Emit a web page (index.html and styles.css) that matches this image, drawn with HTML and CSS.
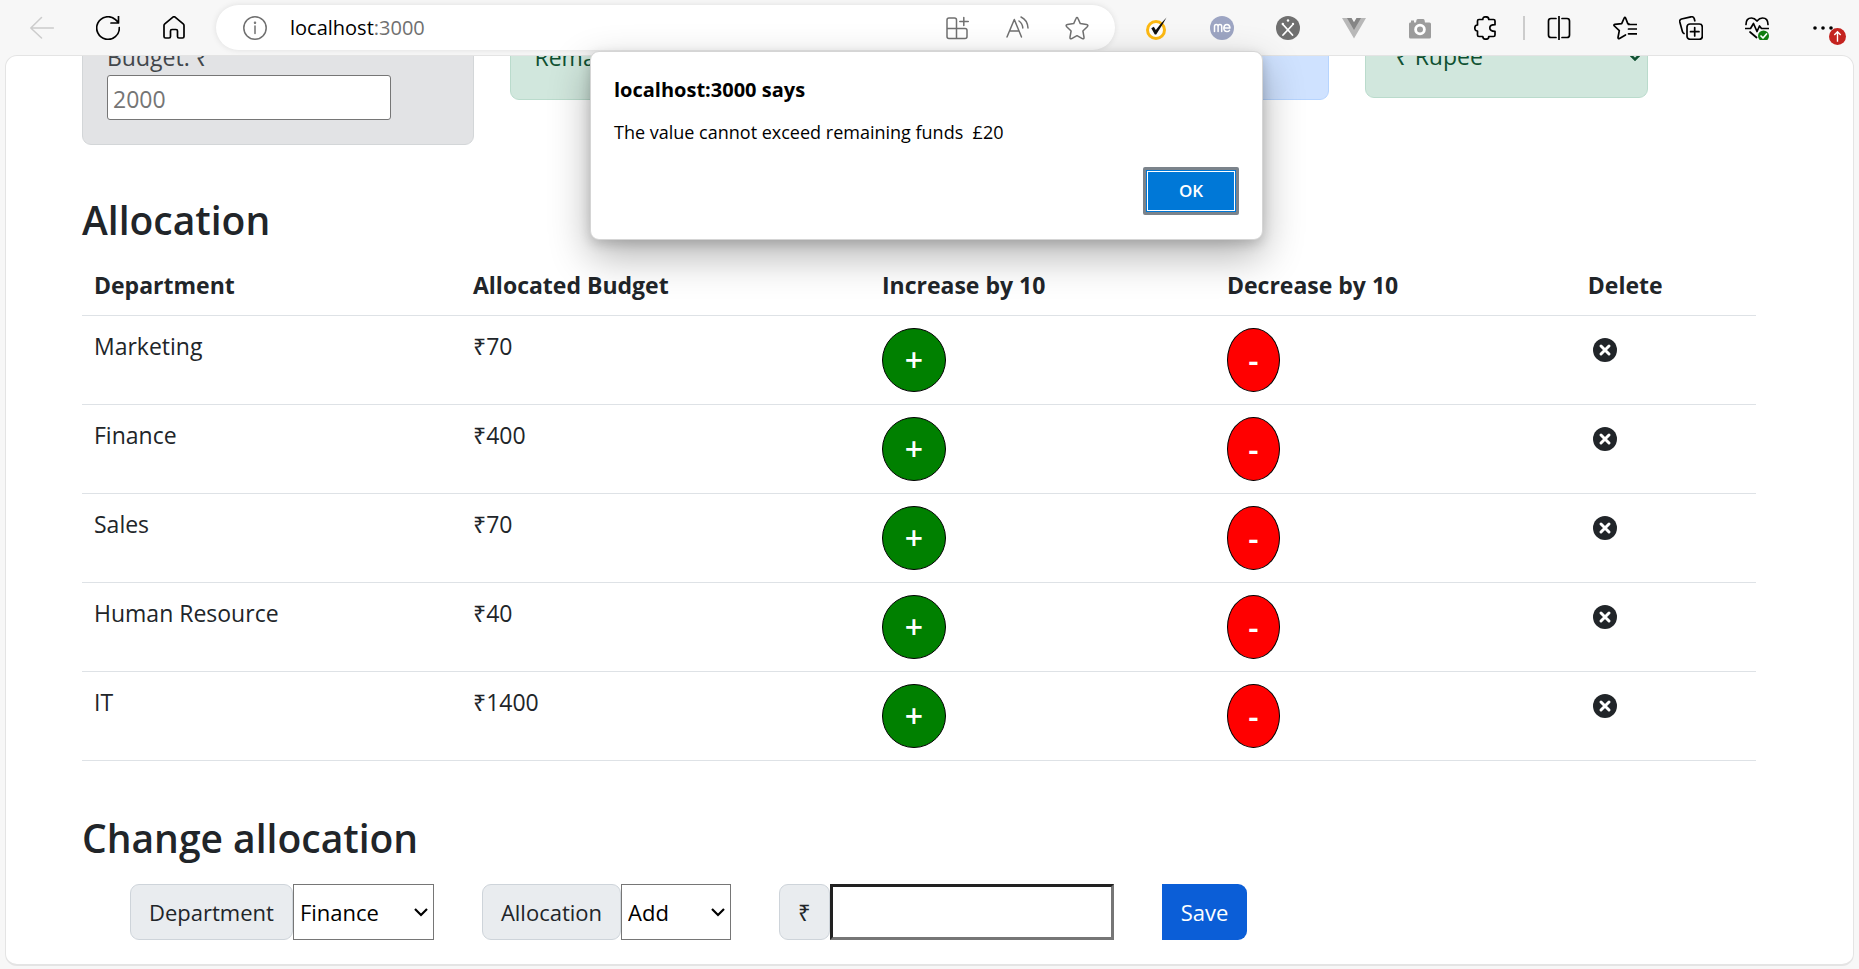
FILE: index.html
```html
<!DOCTYPE html>
<html lang="en">
<head>
<meta charset="utf-8">
<title>Budget Allocation</title>
<link rel="stylesheet" href="styles.css">
</head>
<body>
<header class="toolbar">
  <button class="tool tool-disabled" aria-label="Back"><svg class="icon" viewBox="0 0 24 24"><path d="M23.500 12H0.800M11.500 1.500L0.800 12l10.700 10"/></svg></button>
  <button class="tool" aria-label="Refresh"><svg class="icon icon-strong" viewBox="0 0 24 24"><path d="M23.300 11.500A11.300 11.300 0 1 1 19.500 3.600L22.300 6.500M22.500 0v7h-7.500"/></svg></button>
  <button class="tool" aria-label="Home"><svg class="icon icon-strong" viewBox="0 0 24 24"><path d="M2 9.500Q2 8.500 2.800 7.800L10.600 1.300Q12 .2 13.400 1.300L21.200 7.800Q22 8.500 22 9.500V20.500Q22 22 20.500 22H17Q15.500 22 15.500 20.500V15Q15.500 13.500 14 13.500H10Q8.500 13.500 8.500 15V20.500Q8.500 22 7 22H3.500Q2 22 2 20.500Z"/></svg></button>
  <div class="address">
    <button class="info" aria-label="Site information"><svg class="icon" viewBox="0 0 24 24"><circle cx="12" cy="12" r="11.200"/><path d="M12 10v7.500"/><circle cx="12" cy="6.800" r=".5"/></svg></button>
    <span class="url">localhost<span class="port">:3000</span></span>
    <button class="addr-tool" aria-label="Apps"><svg class="icon" viewBox="0 0 24 24"><path d="M11.500 22.500H4Q2 22.500 2 20.500V4Q2 2 4 2H9.500Q11.500 2 11.500 4ZM2 12.500H20Q22 12.500 22 14.500V20.500Q22 22.500 20 22.500H11.500M18.800 1.500v8M14.800 5.500h8.500"/></svg></button>
    <button class="addr-tool" aria-label="Read aloud"><svg class="icon" viewBox="0 0 24 24"><path d="M2 21L9.300 3.500L16.500 21M4.500 15H14M14 5Q17.500 7.500 17.800 12M16 1Q22.500 4 23 12"/></svg></button>
    <button class="addr-tool" aria-label="Add to favorites"><svg class="icon" viewBox="0 0 24 24"><path d="M12 1.500Q12.600 1.500 13 2.500L15.300 7.600L21.500 8.600Q23.800 9 22.300 10.700L17.900 15L19 21.200Q19.200 23.400 17.300 22.600L12 19.700L6.700 22.600Q4.800 23.400 5 21.200L6.100 15L1.700 10.700Q.2 9 2.500 8.600L8.700 7.600L11 2.500Q11.400 1.500 12 1.500Z"/></svg></button>
  </div>
  <button class="tool" aria-label="Norton"><svg class="icon" viewBox="0 0 24 24"><circle cx="12" cy="14" r="8.500" fill="#fff" stroke="#fdb913" stroke-width="3"/><path d="M7.300 12.300L9.800 10.800L11.800 14L17 7.500L22.500 1.500L18.500 8.500L12.200 18.500H10.800Z" fill="#111" stroke="none"/></svg></button>
  <button class="tool" aria-label="me"><svg class="icon" viewBox="0 0 24 24"><circle cx="12" cy="12" r="12" fill="#9da5c3" stroke="none"/><path d="M4.500 15.500V10.500Q4.500 8.500 6.300 8.500T8.100 10.500V15.500M8.100 10.500Q8.100 8.500 9.900 8.500T11.700 10.500V15.500M13.800 12H20Q19.600 8.500 16.900 8.500T13.800 12Q13.900 15.500 17 15.500Q18.700 15.500 19.500 14.300" stroke="#fff"/></svg></button>
  <button class="tool" aria-label="X extension"><svg class="icon" viewBox="0 0 24 24"><circle cx="12" cy="12" r="12" fill="#707070" stroke="none"/><path d="M7 8.500L16.500 19M16 9.500L7 19" stroke="#fff" stroke-width="1.800"/><circle cx="12" cy="4.500" r="1.200" fill="#fff" stroke="none"/><circle cx="6.800" cy="8" r="1.200" fill="#fff" stroke="none"/><circle cx="17" cy="8" r="1.200" fill="#fff" stroke="none"/></svg></button>
  <button class="tool" aria-label="Vue"><svg class="icon" viewBox="0 0 24 24"><path d="M0 2H9L12 7L15 2H24L12 22.500Z" fill="#b8b8b8" stroke="none"/><path d="M5 2H9.500L12 6.300L14.500 2H19L12 14Z" fill="#858585" stroke="none"/></svg></button>
  <button class="tool" aria-label="Screenshot"><svg class="icon" viewBox="0 0 24 24"><path d="M3 4.500H6V6.500H3ZM2 6.500H8L8.500 4Q8.800 3 10 3H15Q16.200 3 16.500 4L17 6.500H21.500Q23 6.500 23 8V21Q23 22.500 21.500 22.500H2.500Q1 22.500 1 21V8Q1 6.500 2 6.500Z" fill="#9c9c9c" stroke="none"/><circle cx="12" cy="13.500" r="4.400" fill="#9c9c9c" stroke="#fff" stroke-width="2.800"/></svg></button>
  <button class="tool" aria-label="Extensions"><svg class="icon icon-strong" viewBox="0 0 24 24"><path d="M3.500 5Q3.500 3.500 5 3.500H8.800Q8.800 .8 11.800 .8T14.800 3.500H19.500Q21 3.500 21 5V8.700Q15.800 8.700 15.800 12T21 15.300V19Q21 20.500 19.500 20.500H14.800Q14.800 23.200 11.800 23.200T8.800 20.500H5Q3.500 20.500 3.500 19V15Q.8 15 .8 12T3.500 9Z"/></svg></button>
  <span class="separator"></span>
  <button class="tool" aria-label="Split screen"><svg class="icon icon-strong" viewBox="0 0 24 24"><path d="M9 2.500H4Q1.500 2.500 1.500 5V19Q1.500 21.500 4 21.500H9M15 2.500H20Q22.500 2.500 22.500 5V19Q22.500 21.500 20 21.500H15M12 .5V23.500"/></svg></button>
  <button class="tool" aria-label="Favorites"><svg class="icon icon-strong" viewBox="0 0 24 24"><path d="M16.500 8.300L14.800 7.600L12.600 2Q11.900 .5 11.200 2L8.700 7.600L1.800 8.400Q.3 8.800 1.400 10L6.300 14.600L5 21.500Q5 23.200 6.500 22.500L12.500 19M15.500 8.500H24M15.500 13H24M15.500 17.800H24"/></svg></button>
  <button class="tool" aria-label="Collections"><svg class="icon icon-strong" viewBox="0 0 24 24"><rect x="8" y="8" width="15.300" height="15.300" rx="3"/><path d="M15.700 11.500v8.500M11.500 15.700H20M5 17.500Q3.800 17 3.400 15.500L.8 6Q.3 3.800 2.500 3L12 .8Q14.500 .5 15.200 2.500L15.800 4.800"/></svg></button>
  <button class="tool" aria-label="Browser essentials"><svg class="icon icon-strong" viewBox="0 0 24 24"><path d="M1 8.500Q1 2 6.500 2Q9.500 2 12 5Q14.500 2 17.500 2Q23 2 23 8.500M0 12.500H5.500L8.500 7.500L12 15.500L14.500 10L16.500 12.500H24M5 16L11.500 21.500"/><circle cx="18.500" cy="20" r="5.500" fill="#107c10" stroke="none"/><path d="M16 20l2 2 3.500-4" stroke="#fff"/></svg></button>
  <button class="tool menu" aria-label="Settings and more"><svg class="icon icon-strong" viewBox="0 0 24 24"><g fill="#000" stroke="none"><circle cx="4" cy="12" r="1.800"/><circle cx="12" cy="12" r="1.800"/><circle cx="20" cy="12" r="1.800"/></g></svg><svg class="update" viewBox="0 0 16 16"><circle cx="8" cy="8" r="8" fill="#c4231f"/><path d="M8 13V4M5 6.500L8 3.500L11 6.500" fill="none" stroke="#fff" stroke-width="1.300"/></svg></button>
</header>

<main class="page">
  <section class="summary">
    <div class="alert alert-secondary"><label for="budget">Budget: ₹</label><input class="budget-input" id="budget" type="text" placeholder="2000"></div>
    <div class="alert alert-success">Remaining: ₹20</div>
    <div class="alert alert-primary">Spent so far: ₹1980</div>
    <select class="alert alert-success currency" aria-label="Currency"><option>₹ Rupee</option></select>
  </section>

  <h3 class="heading">Allocation</h3>
  <table class="allocations">
    <colgroup><col class="col-dept"><col class="col-budget"><col class="col-inc"><col class="col-dec"><col></colgroup>
    <thead><tr><th>Department</th><th>Allocated Budget</th><th>Increase by 10</th><th>Decrease by 10</th><th>Delete</th></tr></thead>
    <tbody>
      <tr><td>Marketing</td><td>₹70</td><td><button class="round plus">+</button></td><td><button class="round minus">-</button></td><td><button class="delete" aria-label="Delete Marketing"><svg viewBox="0 0 24 24"><circle cx="12" cy="12" r="12"/><path d="M8 8l8 8M16 8l-8 8"/></svg></button></td></tr>
      <tr><td>Finance</td><td>₹400</td><td><button class="round plus">+</button></td><td><button class="round minus">-</button></td><td><button class="delete" aria-label="Delete Finance"><svg viewBox="0 0 24 24"><circle cx="12" cy="12" r="12"/><path d="M8 8l8 8M16 8l-8 8"/></svg></button></td></tr>
      <tr><td>Sales</td><td>₹70</td><td><button class="round plus">+</button></td><td><button class="round minus">-</button></td><td><button class="delete" aria-label="Delete Sales"><svg viewBox="0 0 24 24"><circle cx="12" cy="12" r="12"/><path d="M8 8l8 8M16 8l-8 8"/></svg></button></td></tr>
      <tr><td>Human Resource</td><td>₹40</td><td><button class="round plus">+</button></td><td><button class="round minus">-</button></td><td><button class="delete" aria-label="Delete Human Resource"><svg viewBox="0 0 24 24"><circle cx="12" cy="12" r="12"/><path d="M8 8l8 8M16 8l-8 8"/></svg></button></td></tr>
      <tr><td>IT</td><td>₹1400</td><td><button class="round plus">+</button></td><td><button class="round minus">-</button></td><td><button class="delete" aria-label="Delete IT"><svg viewBox="0 0 24 24"><circle cx="12" cy="12" r="12"/><path d="M8 8l8 8M16 8l-8 8"/></svg></button></td></tr>
    </tbody>
  </table>

  <h3 class="heading">Change allocation</h3>
  <form class="change">
    <div class="group"><label class="addon" for="department">Department</label><select class="field department" id="department"><option>Finance</option></select></div>
    <div class="group"><label class="addon" for="action">Allocation</label><select class="field action" id="action"><option>Add</option></select></div>
    <div class="group"><label class="addon" for="cost">₹</label><input class="cost" id="cost" type="text"></div>
    <button class="save" type="button">Save</button>
  </form>
</main>

<dialog class="prompt" open aria-labelledby="prompt-title">
  <h1 class="prompt-title" id="prompt-title">localhost:3000 says</h1>
  <p class="prompt-text">The value cannot exceed remaining funds&nbsp; £20</p>
  <button class="ok">OK</button>
</dialog>
</body>
</html>
```
FILE: styles.css
```css
* { box-sizing: border-box; }

body {
  margin: 0;
  height: 100vh;
  overflow: hidden;
  display: flex;
  flex-direction: column;
  background: #f7f7f7;
  color: #212529;
  font: 23px/36px "Open Sans", "Noto Sans", sans-serif;
}

button, input, select { font: inherit; color: inherit; margin: 0; }
button { padding: 0; border: 0; background: none; }

/* Browser toolbar */
.toolbar {
  flex: none;
  display: flex;
  align-items: center;
  height: 55px;
  padding: 0 3px 0 9px;
}
.tool {
  flex: none;
  display: flex;
  align-items: center;
  justify-content: center;
  width: 66px;
  height: 46px;
  color: #000;
}
.tool-disabled { color: #ccc; }
.icon {
  width: 24px;
  height: 24px;
  fill: none;
  stroke: currentColor;
  stroke-width: 1.5;
  stroke-linecap: round;
  stroke-linejoin: round;
}
.icon-strong { stroke-width: 1.7; }
.address {
  flex: 1;
  display: flex;
  align-items: center;
  height: 45px;
  margin: 0 8px 0 9px;
  padding: 0 8px 0 27px;
  border-radius: 23px;
  background: #fff;
  box-shadow: 0 0 6px rgba(0, 0, 0, .1);
  color: #707070;
}
.info { display: flex; }
.url {
  flex: 1;
  margin-left: 23px;
  color: #000;
  font-size: 20px;
}
.port { color: #707070; }
.addr-tool {
  display: flex;
  justify-content: center;
  width: 60px;
}
.separator {
  width: 2px;
  height: 24px;
  margin: 0 1px 0 4px;
  background: #ccc;
}
.menu { position: relative; }
.update {
  position: absolute;
  right: 10px;
  top: 23px;
  width: 17px;
  height: 17px;
}

/* Web page */
.page {
  flex: 1;
  min-height: 0;
  margin: 0 5px 3px;
  padding: 0 97px 0 76px;
  overflow: hidden;
  background: #fff;
  border: 1px solid #e4e4e4;
  border-bottom-width: 2px;
  border-radius: 12px;
}
.summary {
  display: grid;
  grid-template-columns: repeat(4, 1fr);
  gap: 36px;
  align-items: start;
  margin-top: -42px;
}
.alert {
  padding: 24px;
  border: 1px solid;
  border-radius: 9px;
}
.alert-secondary { background: #e2e3e5; border-color: #d3d6d8; color: #41464b; }
.alert-success { background: #d1e7dd; border-color: #badbcc; color: #0f5132; }
.alert-primary { background: #cfe2ff; border-color: #b6d4fe; color: #084298; }
.alert label { display: block; }
.budget-input {
  display: block;
  width: 284px;
  max-width: 100%;
  height: 45px;
  padding: 4px 5px 2px;
  border: 1px solid #767676;
  border-radius: 3px;
  background: #fff;
  color: #212529;
}
.budget-input::placeholder { color: #757575; }
.currency, .field {
  appearance: none;
  background-repeat: no-repeat;
}
.currency {
  width: 283px;
  max-width: 100%;
  height: 84px;
  padding: 0 30px;
  background-image: url("data:image/svg+xml,%3Csvg xmlns='http://www.w3.org/2000/svg' width='14' height='9'%3E%3Cpath d='M1 1.500l6 6 6-6' fill='none' stroke='%230f5132' stroke-width='2.500'/%3E%3C/svg%3E");
  background-position: right 5px center;
}
.heading {
  margin: 50px 0 11px;
  font-size: 39px;
  font-weight: 600;
  line-height: 50px;
}

.allocations {
  width: 100%;
  margin-bottom: 52px;
  table-layout: fixed;
  border-collapse: collapse;
}
.col-dept { width: 22.640%; }
.col-budget { width: 24.430%; }
.col-inc { width: 20.610%; }
.col-dec { width: 21.560%; }
.allocations th, .allocations td {
  padding: 12px;
  border-bottom: 1px solid #dee2e6;
  text-align: left;
  vertical-align: top;
}
.allocations th { line-height: 35px; font-weight: 700; }
.round {
  display: block;
  height: 64px;
  border: 1px solid #000;
  border-radius: 50%;
  color: #fff;
  font-size: 32px;
  font-weight: 600;
}
.plus { width: 64px; background: #008000; }
.minus { width: 53px; background: #f00; }
.delete {
  display: block;
  margin: 10px 0 0 5px;
}
.delete svg {
  display: block;
  width: 24px;
  height: 24px;
  fill: #212529;
}
.delete path { stroke: #fff; stroke-width: 3; stroke-linecap: round; }

.change {
  display: flex;
  gap: 48px;
  margin-top: 21px;
  padding-left: 48px;
  font-size: 22px;
}
.group { display: flex; height: 56px; }
.addon {
  display: flex;
  align-items: center;
  padding: 0 18px;
  border: 1px solid #ced4da;
  border-radius: 9px;
  background: #e9ecef;
}
.field {
  padding: 0 6px;
  border: 1px solid #767676;
  border-radius: 0;
  background-color: #fff;
  background-image: url("data:image/svg+xml,%3Csvg xmlns='http://www.w3.org/2000/svg' width='14' height='9'%3E%3Cpath d='M1 1l6 6 6-6' fill='none' stroke='%23000' stroke-width='2.200'/%3E%3C/svg%3E");
  background-position: right 5px center;
  color: #000;
}
.department { width: 141px; }
.action { width: 110px; }
.cost {
  width: 284px;
  padding: 0 6px;
  border: 3px solid;
  border-color: #212121 #767676 #767676 #212121;
  background: #fff;
}
.save {
  height: 56px;
  padding: 0 19px;
  border-radius: 0 9px 9px 0;
  background: #0b5ed7;
  color: #fff;
}

/* Alert window */
.prompt {
  position: absolute;
  top: 51px;
  right: 6px;
  left: 0;
  width: 673px;
  max-width: 100%;
  margin: 0 auto;
  padding: 24px 23px;
  border: 1px solid #d5d5d5;
  border-radius: 9px;
  background: #fff;
  color: #000;
  box-shadow: 0 16px 40px rgba(0, 0, 0, .3), 0 4px 12px rgba(0, 0, 0, .16);
}
.prompt-title {
  margin: 0 0 14px;
  font-size: 20px;
  font-weight: 700;
  line-height: 28px;
}
.prompt-text {
  margin: 0 0 21px;
  font-size: 18px;
  line-height: 28px;
}
.ok {
  display: block;
  width: 96px;
  height: 48px;
  margin-left: auto;
  border: 3px solid #7b838b;
  border-radius: 2px;
  outline: 1px solid #fff;
  outline-offset: -5px;
  background: #0078d7;
  color: #fff;
  font-size: 17px;
  font-weight: 600;
}
```
